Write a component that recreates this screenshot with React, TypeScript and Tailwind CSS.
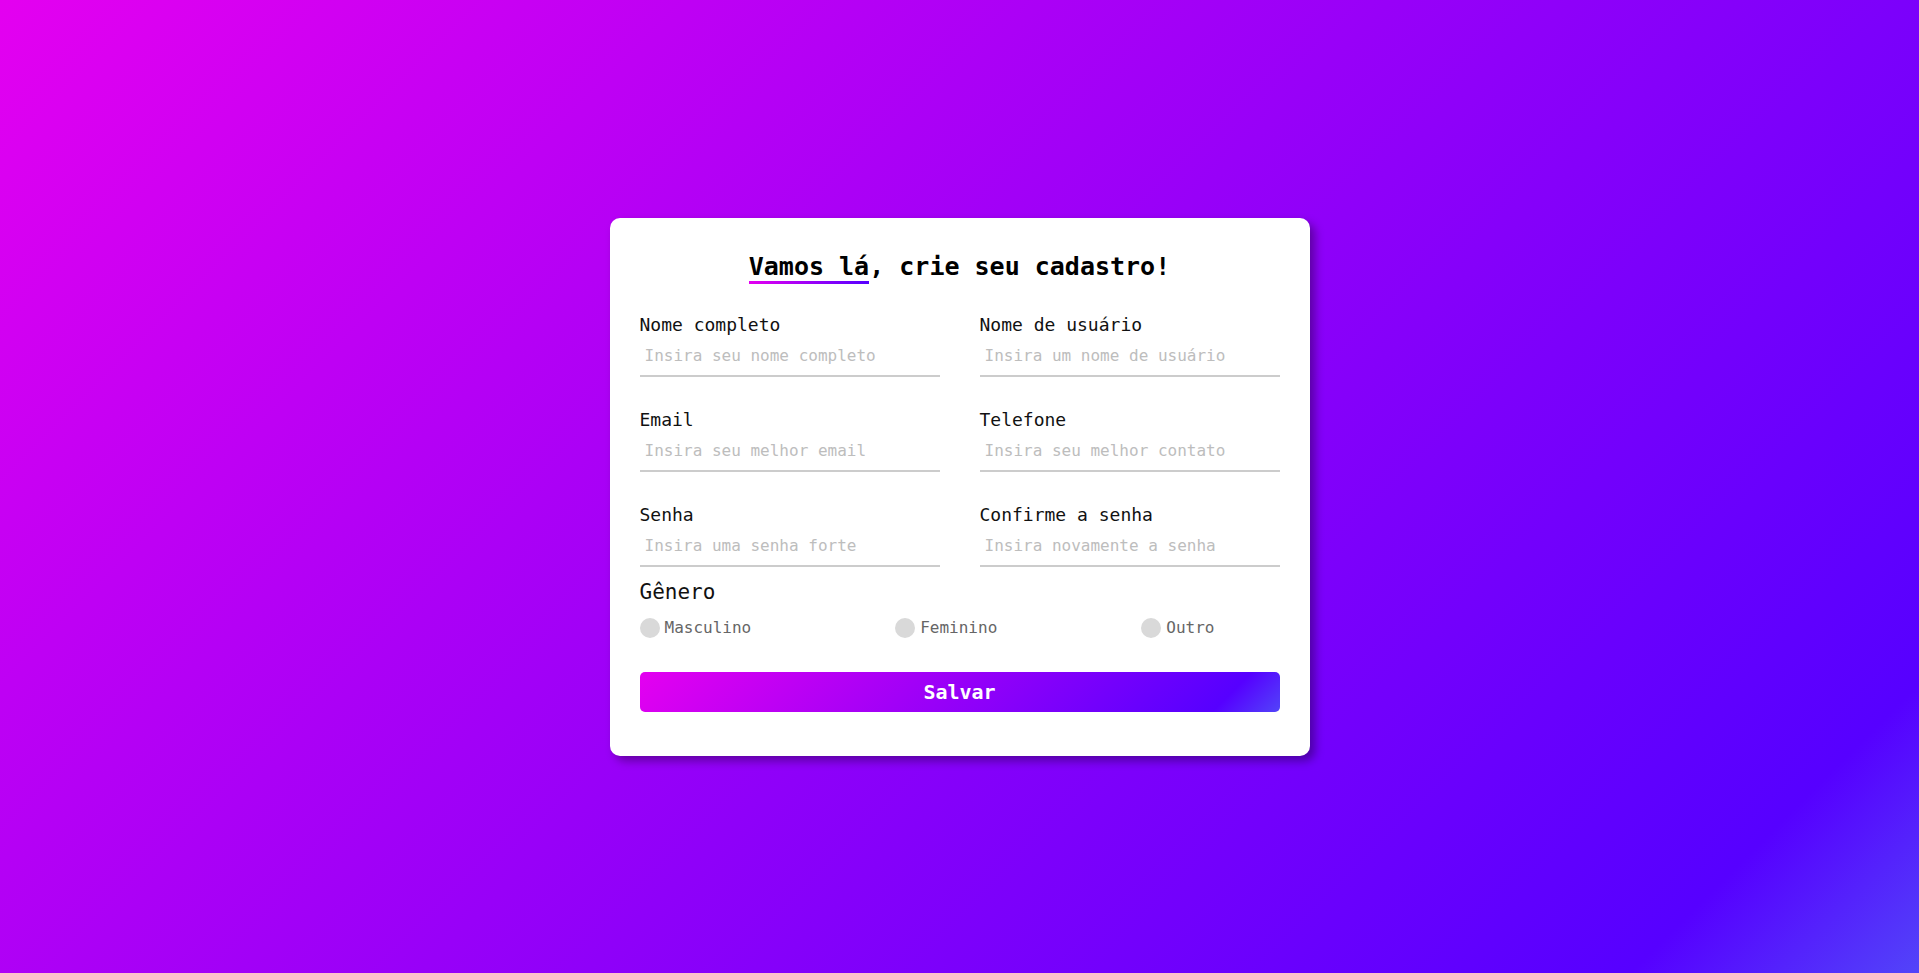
const fields = [
  { label: "Nome completo", placeholder: "Insira seu nome completo", type: "text" },
  { label: "Nome de usuário", placeholder: "Insira um nome de usuário", type: "text" },
  { label: "Email", placeholder: "Insira seu melhor email", type: "email" },
  { label: "Telefone", placeholder: "Insira seu melhor contato", type: "tel" },
  { label: "Senha", placeholder: "Insira uma senha forte", type: "password" },
  { label: "Confirme a senha", placeholder: "Insira novamente a senha", type: "password" },
];

const genders = ["Masculino", "Feminino", "Outro"];

export default function App() {
  return (
    <div className="flex min-h-screen w-full items-center justify-center bg-[linear-gradient(135deg,#e400f0_0%,#5600ff_90%,#5244f9_100%)] font-['DejaVu_Sans_Mono',monospace]">
      <form className="w-[700px] rounded-[10px] bg-white px-[30px] pt-[34px] pb-[44px] shadow-[5px_5px_10px_rgba(0,0,0,0.35)]">
        <h1 className="text-center text-[25px] font-bold leading-[30px] text-black">
          <span className="relative inline-block">
            Vamos lá
            <span className="absolute left-0 right-0 top-[29px] h-[3px] bg-[linear-gradient(to_right,#e400f0,#5600ff)]" />
          </span>
          , crie seu cadastro!
        </h1>

        <div className="mt-[31px] grid grid-cols-2 gap-x-[40px] gap-y-[31px]">
          {fields.map((field) => (
            <div key={field.label} className="flex flex-col">
              <label className="text-[18px] leading-[24px] text-[#111]">{field.label}</label>
              <input
                type={field.type}
                placeholder={field.placeholder}
                className="h-[40px] border-b-2 border-[#cccccc] px-[5px] text-[16px] text-[#333] outline-none placeholder:text-[#bdbdbd]"
              />
            </div>
          ))}
        </div>

        <div className="mt-[11px]">
          <p className="text-[21px] leading-[28px] text-[#111]">Gênero</p>
          <div className="mt-[10px] flex gap-[144px]">
            {genders.map((g) => (
              <label key={g} className="flex items-center gap-[5px] text-[16px] leading-[24px] text-[#666]">
                <input type="radio" name="genero" className="h-5 w-5 appearance-none rounded-full bg-[#d9d9d9]" />
                {g}
              </label>
            ))}
          </div>
        </div>

        <button
          type="button"
          className="mt-[32px] h-[40px] w-full rounded-[5px] bg-[linear-gradient(135deg,#e400f0_0%,#5600ff_90%,#5244f9_100%)] text-[20px] font-semibold text-white"
        >
          Salvar
        </button>
      </form>
    </div>
  );
}
